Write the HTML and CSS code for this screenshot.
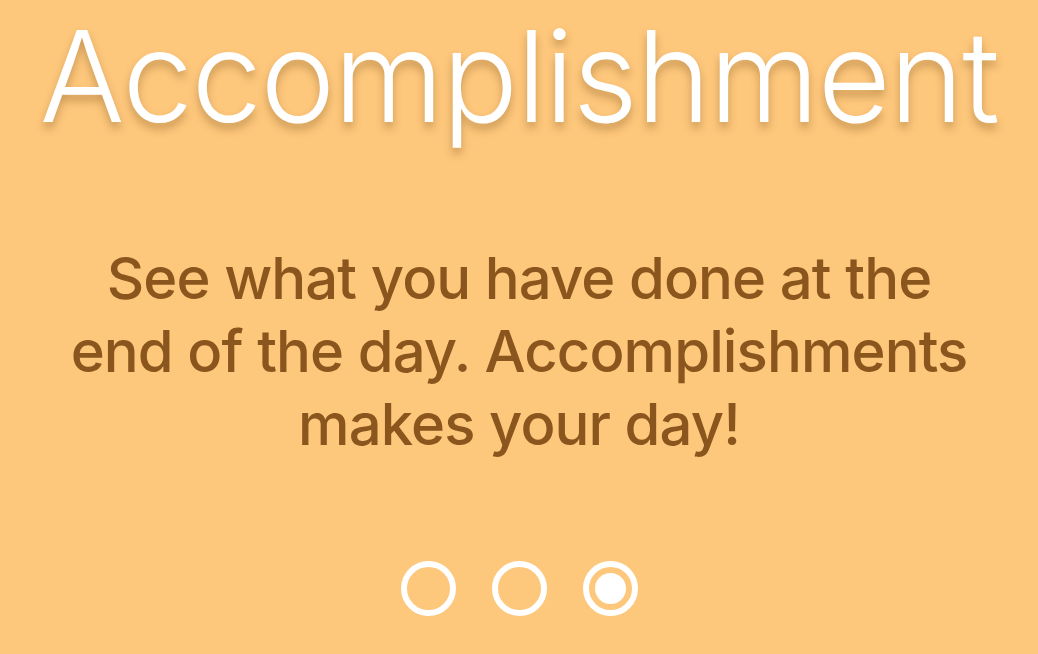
FILE: index.html
```html
<!DOCTYPE html>
<html lang="en">
<head>
<meta charset="utf-8">
<title>Accomplishment</title>
<link rel="stylesheet" href="styles.css">
</head>
<body>
<main class="slide">
  <h1 class="title">Accomplishment</h1>
  <p class="desc">See what you have done at the end of the day. Accomplishments makes your day!</p>
  <div class="dots">
    <span class="dot"></span>
    <span class="dot"></span>
    <span class="dot active"></span>
  </div>
</main>
</body>
</html>
```

FILE: styles.css
```css
html, body {
  margin: 0;
  padding: 0;
  height: 100%;
  background: #fdc77c;
}
.slide {
  height: 654px;
  display: flex;
  flex-direction: column;
  align-items: center;
  font-family: Inter, "Noto Sans", sans-serif;
}
.title {
  margin: 0;
  font-size: 126px;
  font-weight: 300;
  line-height: 152px;
  color: #ffffff;
  text-shadow: 0 6px 8px rgba(130, 85, 30, 0.4);
  letter-spacing: -1.4px;
  white-space: nowrap;
}
.desc {
  margin: 90px 0 0;
  width: 910px;
  text-align: center;
  font-size: 58px;
  font-weight: 500;
  line-height: 73px;
  letter-spacing: -0.9px;
  color: #8b561e;
}
.dots {
  margin-top: 100px;
  display: flex;
  gap: 36px;
}
.dot {
  width: 55px;
  height: 55px;
  box-sizing: border-box;
  border: 6px solid #ffffff;
  border-radius: 50%;
  display: flex;
  align-items: center;
  justify-content: center;
}
.dot.active::after {
  content: "";
  width: 31px;
  height: 31px;
  border-radius: 50%;
  background: #ffffff;
}
```
